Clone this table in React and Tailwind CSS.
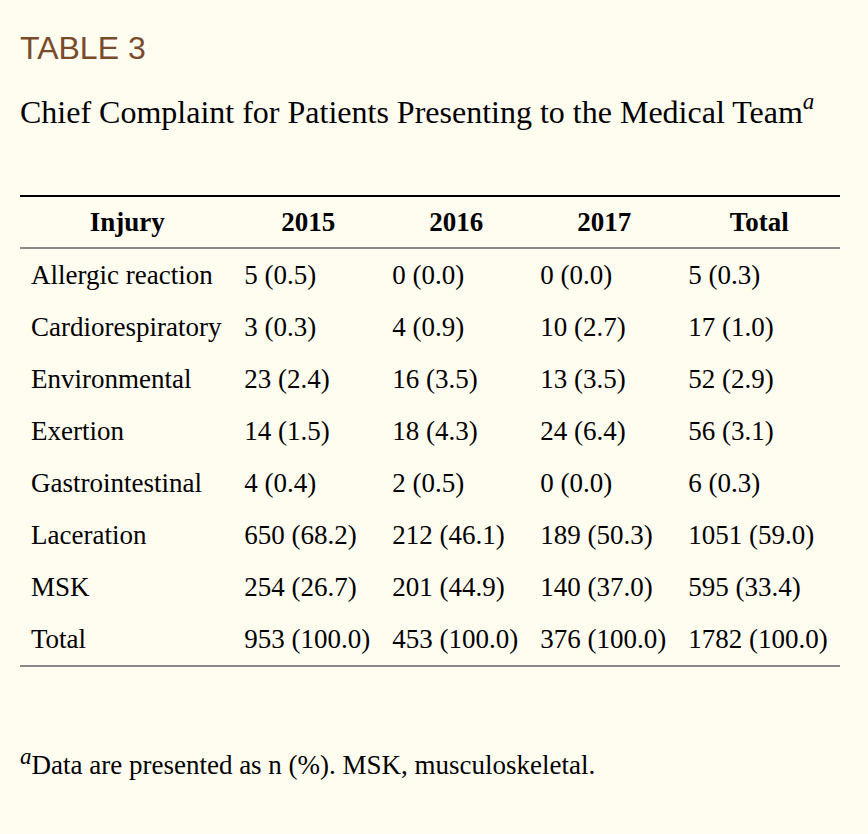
import React from 'react';

const rows = [
  ['Allergic reaction', '5 (0.5)', '0 (0.0)', '0 (0.0)', '5 (0.3)'],
  ['Cardiorespiratory', '3 (0.3)', '4 (0.9)', '10 (2.7)', '17 (1.0)'],
  ['Environmental', '23 (2.4)', '16 (3.5)', '13 (3.5)', '52 (2.9)'],
  ['Exertion', '14 (1.5)', '18 (4.3)', '24 (6.4)', '56 (3.1)'],
  ['Gastrointestinal', '4 (0.4)', '2 (0.5)', '0 (0.0)', '6 (0.3)'],
  ['Laceration', '650 (68.2)', '212 (46.1)', '189 (50.3)', '1051 (59.0)'],
  ['MSK', '254 (26.7)', '201 (44.9)', '140 (37.0)', '595 (33.4)'],
  ['Total', '953 (100.0)', '453 (100.0)', '376 (100.0)', '1782 (100.0)'],
];

const headers = ['Injury', '2015', '2016', '2017', 'Total'];

export default function App() {
  return (
    <div className="min-h-screen bg-[#fffcf0] px-5 pt-[29px] text-black" style={{ fontFamily: '"Liberation Serif", serif' }}>
      <h1 className="text-[32px] leading-[38px] text-[#7a4a2c]" style={{ fontFamily: '"Liberation Sans", Arial, sans-serif' }}>
        TABLE 3
      </h1>
      <h2 className="mt-[25px] text-[32px] leading-[38px]">
        Chief Complaint for Patients Presenting to the Medical Team
        <sup className="relative top-[-2px] text-[23px] italic align-super leading-none">a</sup>
      </h2>

      <table className="mt-[64px] w-[820px] border-collapse border-t-2 border-b-2 border-t-black border-b-[#8a8a8a] text-[27px]">
        <thead>
          <tr className="border-b-2 border-[#8a8a8a]">
            {headers.map((h) => (
              <th key={h} className="px-[10px] py-[10px] text-center font-bold leading-[30px]">
                {h}
              </th>
            ))}
          </tr>
        </thead>
        <tbody>
          {rows.map((r) => (
            <tr key={r[0]}>
              {r.map((c, i) => (
                <td key={i} className={`whitespace-nowrap py-[11px] text-left leading-[30px] ${i === 0 ? 'pl-[11px] pr-[10px]' : 'px-[10px]'}`}>
                  {c}
                </td>
              ))}
            </tr>
          ))}
        </tbody>
      </table>

      <p className="mt-[82px] text-[27px] leading-[32px]">
        <sup className="relative top-[-10px] text-[23px] italic leading-none">a</sup>Data are presented as n (%). MSK, musculoskeletal.
      </p>
    </div>
  );
}
